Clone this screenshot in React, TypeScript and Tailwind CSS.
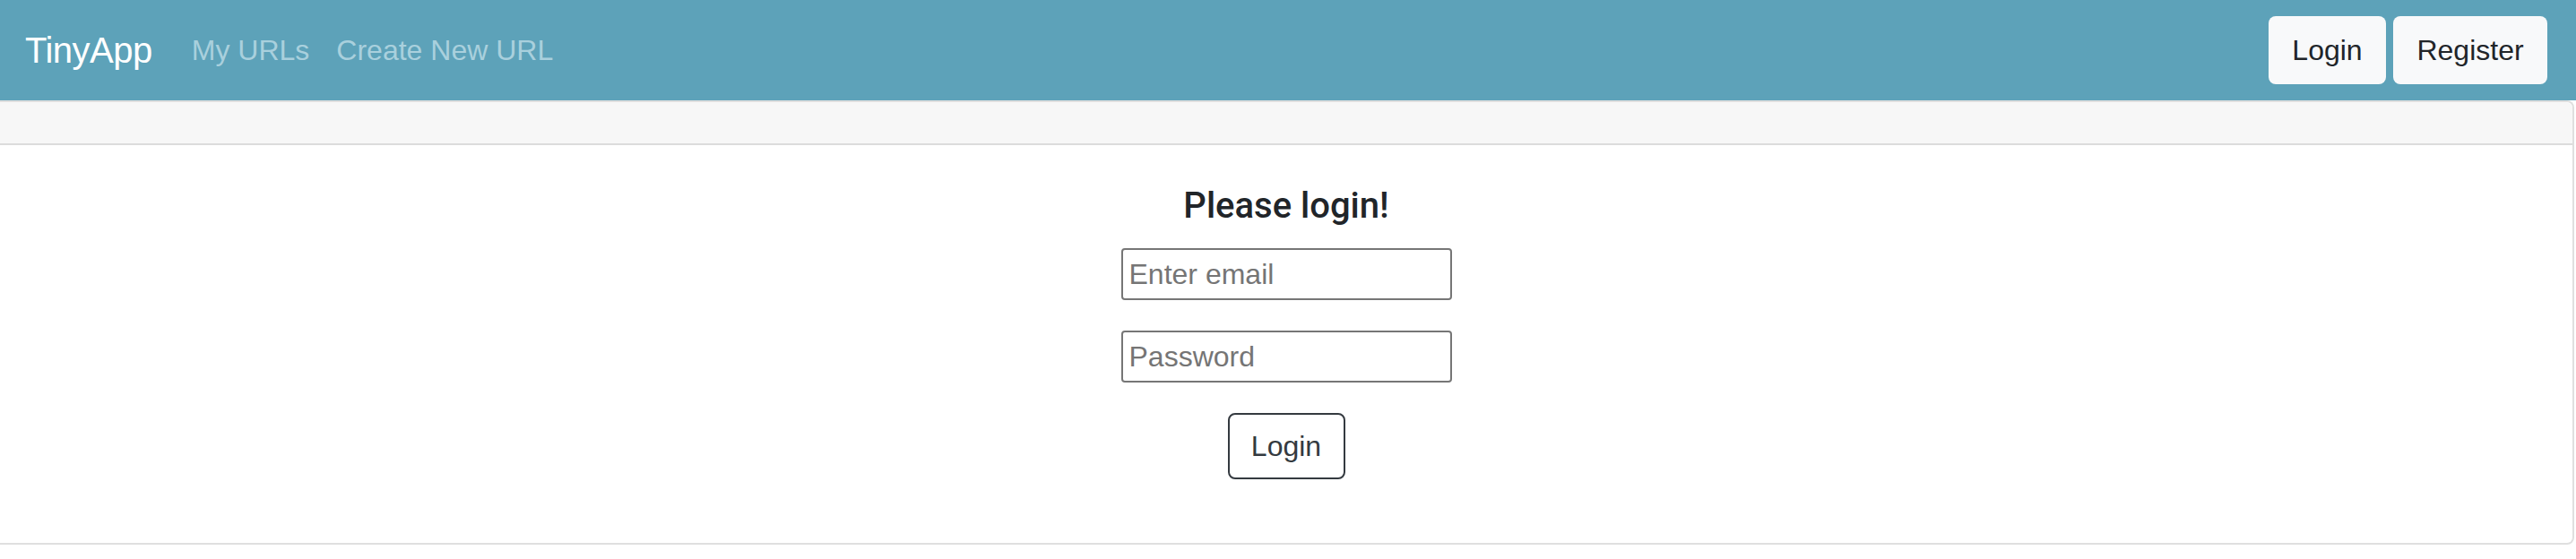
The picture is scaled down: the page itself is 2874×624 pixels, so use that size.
export default function App() {
  return (
    <div className="w-[2874px] h-[624px] bg-white font-['Liberation_Sans',Arial,sans-serif] text-[#212529]">
      {/* top bar */}
      <nav className="h-[112px] bg-[#5da2b9] flex items-center justify-between pl-[28px] pr-[32px]">
        <div className="flex items-center">
          <span className="text-[40px] text-white tracking-[-0.5px]">TinyApp</span>
          <a className="ml-[44px] text-[32px] text-[#a9d0dd]">My URLs</a>
          <a className="ml-[30px] text-[32px] text-[#a9d0dd]">Create New URL</a>
        </div>
        <div className="flex gap-[8px]">
          <button className="h-[76px] w-[131px] rounded-[8px] bg-[#f8f9fa] text-[32px] text-[#212529]">Login</button>
          <button className="h-[76px] w-[172px] rounded-[8px] bg-[#f8f9fa] text-[32px] text-[#212529]">Register</button>
        </div>
      </nav>

      {/* card */}
      <div className="w-[2872px] h-[496px] border-[2px] border-l-0 border-[#dfdfdf] rounded-r-[8px] flex flex-col">
        <div className="h-[48px] bg-[#f7f7f7] border-b-[2px] border-[#dcdcdc] rounded-tr-[8px]" />
        <div className="flex-1 flex flex-col items-center pt-[44px]">
          <h5 className="text-[40px] font-medium leading-[48px] font-['Roboto','Liberation_Sans',sans-serif]">Please login!</h5>
          <form className="flex flex-col items-center mt-[23px]">
            <input
              placeholder="Enter email"
              className="w-[369px] h-[58px] border-[2px] border-[#767676] rounded-[4px] px-[7px] text-[32px] placeholder:text-[#757575]"
            />
            <input
              placeholder="Password"
              type="password"
              className="w-[369px] h-[58px] mt-[34px] border-[2px] border-[#767676] rounded-[4px] px-[7px] text-[32px] placeholder:text-[#757575]"
            />
            <button className="mt-[34px] w-[131px] h-[74px] border-[2px] border-[#343a40] rounded-[8px] text-[32px] text-[#343a40]">
              Login
            </button>
          </form>
        </div>
      </div>
    </div>
  );
}
